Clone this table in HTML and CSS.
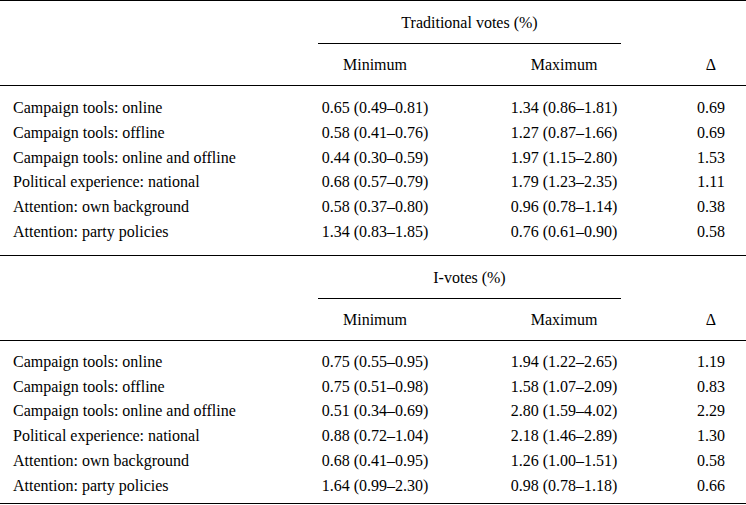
FILE: index.html
```html
<!DOCTYPE html>
<html>
<head>
<meta charset="utf-8">
<link rel="stylesheet" href="styles.css">
</head>
<body>
<div class="tbl">
  <section class="sec">
    <div class="hrow1"><div class="span"><div class="group">Traditional votes (%)</div></div></div>
    <div class="hrow2"><div></div><div class="c">Minimum</div><div class="c">Maximum</div><div class="d">Δ</div></div>
    <div class="body">
      <div class="row"><div class="lab">Campaign tools: online</div><div class="c">0.65 (0.49–0.81)</div><div class="c">1.34 (0.86–1.81)</div><div class="d">0.69</div></div>
      <div class="row"><div class="lab">Campaign tools: offline</div><div class="c">0.58 (0.41–0.76)</div><div class="c">1.27 (0.87–1.66)</div><div class="d">0.69</div></div>
      <div class="row"><div class="lab">Campaign tools: online and offline</div><div class="c">0.44 (0.30–0.59)</div><div class="c">1.97 (1.15–2.80)</div><div class="d">1.53</div></div>
      <div class="row"><div class="lab">Political experience: national</div><div class="c">0.68 (0.57–0.79)</div><div class="c">1.79 (1.23–2.35)</div><div class="d">1.11</div></div>
      <div class="row"><div class="lab">Attention: own background</div><div class="c">0.58 (0.37–0.80)</div><div class="c">0.96 (0.78–1.14)</div><div class="d">0.38</div></div>
      <div class="row"><div class="lab">Attention: party policies</div><div class="c">1.34 (0.83–1.85)</div><div class="c">0.76 (0.61–0.90)</div><div class="d">0.58</div></div>
    </div>
  </section>
  <section class="sec sec-last">
    <div class="hrow1"><div class="span"><div class="group">I-votes (%)</div></div></div>
    <div class="hrow2"><div></div><div class="c">Minimum</div><div class="c">Maximum</div><div class="d">Δ</div></div>
    <div class="body">
      <div class="row"><div class="lab">Campaign tools: online</div><div class="c">0.75 (0.55–0.95)</div><div class="c">1.94 (1.22–2.65)</div><div class="d">1.19</div></div>
      <div class="row"><div class="lab">Campaign tools: offline</div><div class="c">0.75 (0.51–0.98)</div><div class="c">1.58 (1.07–2.09)</div><div class="d">0.83</div></div>
      <div class="row"><div class="lab">Campaign tools: online and offline</div><div class="c">0.51 (0.34–0.69)</div><div class="c">2.80 (1.59–4.02)</div><div class="d">2.29</div></div>
      <div class="row"><div class="lab">Political experience: national</div><div class="c">0.88 (0.72–1.04)</div><div class="c">2.18 (1.46–2.89)</div><div class="d">1.30</div></div>
      <div class="row"><div class="lab">Attention: own background</div><div class="c">0.68 (0.41–0.95)</div><div class="c">1.26 (1.00–1.51)</div><div class="d">0.58</div></div>
      <div class="row"><div class="lab">Attention: party policies</div><div class="c">1.64 (0.99–2.30)</div><div class="c">0.98 (0.78–1.18)</div><div class="d">0.66</div></div>
    </div>
  </section>
</div>
</body>
</html>
```
FILE: styles.css
```css
html, body {
  margin: 0;
  padding: 0;
  background: #fff;
}
body {
  font-family: "Liberation Serif", "Times New Roman", serif;
  font-size: 16px;
  color: #000;
}
.tbl {
  width: 746px;
}
.sec {
  border-top: 1px solid #000;
}
.sec-last {
  border-bottom: 1px solid #000;
}
.hrow1, .hrow2, .row {
  display: grid;
  grid-template-columns: 306px 138px 240px 62px;
}
.span {
  grid-column: 2 / 4;
}
.group {
  margin: 0 63px 0 12px;
  border-bottom: 1px solid #000;
  text-align: center;
  line-height: 40px;
  padding-top: 2px;
}
.hrow2 {
  border-bottom: 1px solid #000;
  line-height: 37px;
  padding: 2px 0;
}
.c {
  text-align: center;
  white-space: nowrap;
}
.d {
  text-align: center;
  padding-right: 8px;
}
.lab {
  padding-left: 13px;
  white-space: nowrap;
}
.body {
  padding: 10px 0;
}
.row {
  line-height: 24.8px;
}
.sec-last .body {
  padding: 9px 0 4px;
}
```
